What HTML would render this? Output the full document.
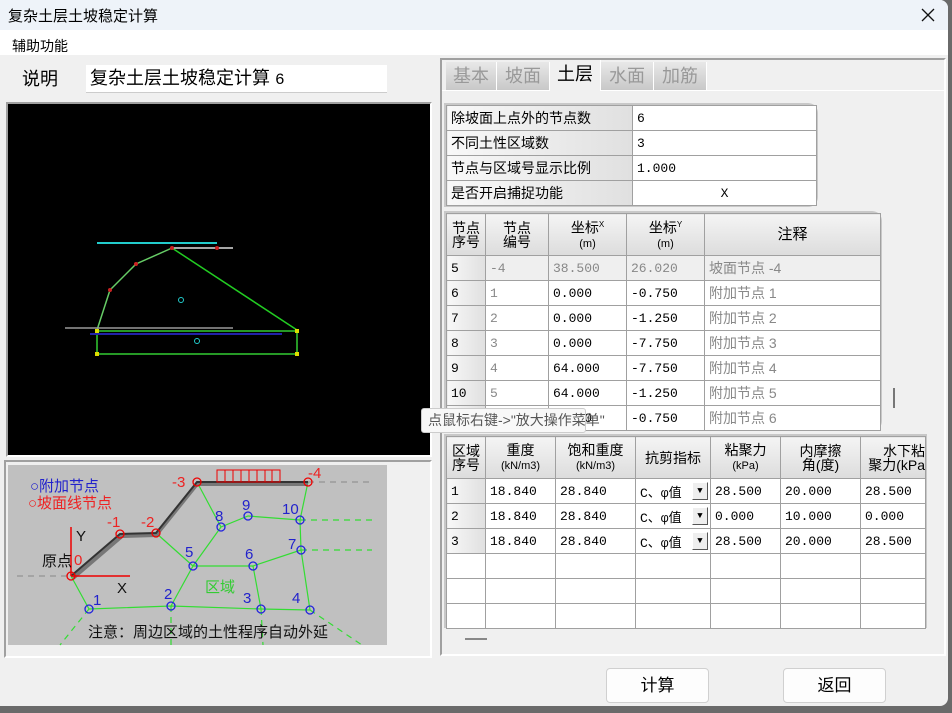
<!DOCTYPE html>
<html><head><meta charset="utf-8">
<style>
*{box-sizing:border-box;margin:0;padding:0}
body{width:952px;height:713px;overflow:hidden;background:#6a6a6a;font-family:"Liberation Sans","Noto Sans CJK SC",sans-serif;position:relative}
.a{position:absolute}
.win{left:0;top:0;width:948px;height:706px;background:#f0f0f0;border-radius:0 8px 8px 0;overflow:hidden}
.title{left:0;top:0;width:948px;height:30px;background:#eef3f9}
.menu{left:0;top:30px;width:948px;height:25px;background:#fff}
table{border-collapse:collapse;table-layout:fixed;font-family:"Liberation Mono","Noto Sans CJK SC",monospace}
td{border:1px solid #a0a0a0;font-size:14px;padding:0 4px;white-space:nowrap;overflow:hidden;height:25px;font-family:"Liberation Sans","Noto Sans CJK SC",sans-serif}
td.n{font-family:"Liberation Mono","Noto Sans CJK SC",monospace;font-size:13px}
td.h{background:linear-gradient(#f4f4f4,#dcdcdc);text-align:center;line-height:14px;font-size:14px;padding:0}
td.r{background:linear-gradient(90deg,#f8f8f8,#e0e0e0)}
.g{color:#888}
.btn{background:#fdfdfd;border:1px solid #d0d0d0;border-radius:4px;font-size:17px;text-align:center;line-height:33px}
.tab{top:62px;height:28px;background:linear-gradient(#e8e8e8,#c8c8c8);color:#999;font-size:18px;text-align:center;line-height:28px;border-right:1px solid #fff}
.dd{position:absolute;right:2px;top:3px;width:16px;height:18px;border:1px solid #555;border-top-color:#fff;border-left-color:#fff;background:#eee;font-size:9px;line-height:16px;text-align:center}
</style></head><body>
<div class="a win">
<div class="a title"></div>
<div class="a" style="left:8px;top:5px;font-size:15px">复杂土层土坡稳定计算</div>
<svg class="a" style="left:921px;top:8px" width="14" height="14"><path d="M1 1L13 13M13 1L1 13" stroke="#111" stroke-width="1.3"/></svg>
<div class="a menu"></div>
<div class="a" style="left:12px;top:36px;font-size:14px">辅助功能</div>

<div class="a" style="left:22px;top:65px;font-size:18px">说明</div>
<div class="a" style="left:86px;top:65px;width:301px;height:28px;background:#fff;border-bottom:1px solid #ccc;font-size:18px;line-height:27px;padding-left:4px">复杂土层土坡稳定计算 <span style="font-family:'Liberation Mono';font-size:16px">6</span></div>

<div class="a" style="left:6px;top:102px;width:426px;height:355px;border:2px solid #a0a0a0;border-right-color:#fff;border-bottom-color:#fff"></div>
<svg class="a" style="left:8px;top:104px" width="422" height="351">
<rect width="422" height="351" fill="#000"/>
<g transform="translate(-8,-104)">
<line x1="97" y1="243" x2="217" y2="243" stroke="#2cc" stroke-width="2"/>
<line x1="172" y1="248" x2="233" y2="248" stroke="#ddd" stroke-width="1.5"/>
<polyline points="97,330 110,290 136,264 172,248" fill="none" stroke="#6c6" stroke-width="1.5"/>
<line x1="172" y1="248" x2="297" y2="330" stroke="#2c2" stroke-width="1.5"/>
<line x1="65" y1="328" x2="233" y2="328" stroke="#999" stroke-width="1.5"/>
<rect x="97" y="331" width="200" height="23" fill="none" stroke="#3c3" stroke-width="1.5"/>
<line x1="90" y1="334" x2="282" y2="334" stroke="#22a" stroke-width="2"/>
<circle cx="181" cy="300" r="2.5" fill="none" stroke="#2cc"/>
<circle cx="197" cy="341" r="2.5" fill="none" stroke="#2cc"/>
<circle cx="172" cy="248" r="2" fill="#c22"/><circle cx="136" cy="264" r="2" fill="#c22"/><circle cx="110" cy="290" r="2" fill="#c22"/><circle cx="217" cy="248" r="2" fill="#c22"/>
<rect x="95" y="352" width="4" height="4" fill="#dd0"/><rect x="295" y="352" width="4" height="4" fill="#dd0"/><rect x="95" y="329" width="4" height="4" fill="#dd0"/><rect x="295" y="329" width="4" height="4" fill="#dd0"/>
</g></svg>

<div class="a" style="left:4px;top:460px;width:428px;height:198px;border:2px solid #a0a0a0;border-right-color:#fff;border-bottom-color:#fff;background:#f0f0f0"></div>
<svg class="a" style="left:0;top:455px" width="440" height="210" font-family="Liberation Sans,Noto Sans CJK SC,sans-serif">
<rect x="8" y="10" width="379" height="180" fill="#c0c0c0"/>
<g stroke="#3d3" stroke-width="1.2" fill="none">
<polyline points="71,121 89,154 171,151 261,154 310,155 301,95 300,65 308,27"/>
<polyline points="171,151 193,111 221,72 248,61 300,65"/>
<line x1="197" y1="27" x2="221" y2="72"/>
<line x1="156" y1="78" x2="193" y2="111"/>
<polyline points="193,111 253,111 301,95"/>
<line x1="253" y1="111" x2="261" y2="154"/>
<g stroke-dasharray="6,5"><line x1="300" y1="65" x2="372" y2="65"/><line x1="301" y1="95" x2="372" y2="95"/>
<line x1="89" y1="154" x2="60" y2="190"/><line x1="171" y1="151" x2="171" y2="190"/><line x1="261" y1="154" x2="263" y2="190"/><line x1="310" y1="155" x2="362" y2="190"/></g>
</g>
<g stroke="#888" stroke-dasharray="6,5"><line x1="17" y1="121" x2="71" y2="121"/><line x1="308" y1="27" x2="372" y2="27"/></g>
<polyline points="73,123 122,81 156,80 197,29 308,29" fill="none" stroke="#777" stroke-width="4"/>
<polyline points="71,121 120,79 156,78 197,27 308,27" fill="none" stroke="#333" stroke-width="2"/>
<g stroke="#e00" fill="none"><rect x="217" y="15" width="63" height="12"/><line x1="225" y1="15" x2="225" y2="27"/><line x1="233" y1="15" x2="233" y2="27"/><line x1="241" y1="15" x2="241" y2="27"/><line x1="249" y1="15" x2="249" y2="27"/><line x1="257" y1="15" x2="257" y2="27"/><line x1="265" y1="15" x2="265" y2="27"/><line x1="272" y1="15" x2="272" y2="27"/></g>
<g stroke="#e00" stroke-width="1.5"><line x1="71" y1="121" x2="71" y2="72"/><line x1="71" y1="121" x2="130" y2="121"/></g>
<g fill="none" stroke="#e00" stroke-width="1.3"><circle cx="71" cy="121" r="4"/><circle cx="120" cy="79" r="4"/><circle cx="156" cy="78" r="4"/><circle cx="197" cy="27" r="4"/><circle cx="308" cy="27" r="4"/></g>
<g fill="none" stroke="#22d" stroke-width="1.3"><circle cx="89" cy="154" r="4"/><circle cx="171" cy="151" r="4"/><circle cx="261" cy="154" r="4"/><circle cx="310" cy="155" r="4"/><circle cx="193" cy="111" r="4"/><circle cx="253" cy="111" r="4"/><circle cx="301" cy="95" r="4"/><circle cx="221" cy="72" r="4"/><circle cx="248" cy="61" r="4"/><circle cx="300" cy="65" r="4"/></g>
<g font-size="15" fill="#22c"><text x="30" y="36">○附加节点</text><text x="93" y="150">1</text><text x="164" y="144">2</text><text x="243" y="148">3</text><text x="292" y="148">4</text><text x="185" y="102">5</text><text x="245" y="104">6</text><text x="288" y="94">7</text><text x="215" y="66">8</text><text x="242" y="55">9</text><text x="282" y="59">10</text></g>
<g font-size="15" fill="#e22"><text x="28" y="53">○坡面线节点</text><text x="107" y="72">-1</text><text x="141" y="72">-2</text><text x="172" y="32">-3</text><text x="308" y="23">-4</text><text x="74" y="110">0</text></g>
<g font-size="15" fill="#111"><text x="76" y="86">Y</text><text x="117" y="138">X</text><text x="42" y="111">原点</text><text x="88" y="182">注意：周边区域的土性程序自动外延</text></g>
<text x="205" y="137" font-size="15" fill="#3c3">区域</text>
</svg>

<div class="a" style="left:440px;top:58px;width:506px;height:598px;border:2px solid #a0a0a0;border-right-color:#fff;border-bottom-color:#fff"></div>
<div class="a" style="left:442px;top:90px;width:502px;height:564px;background:#f0f0f0;border-top:1px solid #fff"></div>
<div class="a tab" style="left:446px;width:51px">基本</div>
<div class="a tab" style="left:497px;width:53px">坡面</div>
<div class="a tab" style="left:550px;top:60px;height:31px;width:51px;background:#f0f0f0;color:#000">土层</div>
<div class="a tab" style="left:601px;width:53px">水面</div>
<div class="a tab" style="left:654px;width:53px">加筋</div>

<div class="a" style="left:444px;top:103px;width:374px;height:104px;background:#c8c8c8;border-radius:0 10px 10px 0"></div>
<table class="a" style="left:446px;top:105px;width:370px;background:#fff">
<col style="width:186px"><col style="width:184px">
<tr><td class="r">除坡面上点外的节点数</td><td class="n">6</td></tr>
<tr><td class="r">不同土性区域数</td><td class="n">3</td></tr>
<tr><td class="r">节点与区域号显示比例</td><td class="n">1.000</td></tr>
<tr><td class="r">是否开启捕捉功能</td><td class="n" style="text-align:center">X</td></tr>
</table>

<div class="a" style="left:444px;top:211px;width:438px;height:220px;background:#c8c8c8;border-radius:0 10px 10px 0"></div>
<table class="a" style="left:446px;top:213px;width:434px;background:#fff">
<col style="width:39px"><col style="width:63px"><col style="width:78px"><col style="width:78px"><col style="width:176px">
<tr style="height:42px"><td class="h">节点<br>序号</td><td class="h">节点<br>编号</td><td class="h">坐标<sup style="font-size:8px">X</sup><br><span style="font-size:11px">(m)</span></td><td class="h">坐标<sup style="font-size:8px">Y</sup><br><span style="font-size:11px">(m)</span></td><td class="h" style="font-size:15px">注释</td></tr>
<tr style="background:#efefef"><td class="r n">5</td><td class="n g">-4</td><td class="n g">38.500</td><td class="n g">26.020</td><td class="g">坡面节点 -4</td></tr>
<tr><td class="r n">6</td><td class="n g">1</td><td class="n">0.000</td><td class="n">-0.750</td><td class="g">附加节点 1</td></tr>
<tr><td class="r n">7</td><td class="n g">2</td><td class="n">0.000</td><td class="n">-1.250</td><td class="g">附加节点 2</td></tr>
<tr><td class="r n">8</td><td class="n g">3</td><td class="n">0.000</td><td class="n">-7.750</td><td class="g">附加节点 3</td></tr>
<tr><td class="r n">9</td><td class="n g">4</td><td class="n">64.000</td><td class="n">-7.750</td><td class="g">附加节点 4</td></tr>
<tr><td class="r n">10</td><td class="n g">5</td><td class="n">64.000</td><td class="n">-1.250</td><td class="g">附加节点 5</td></tr>
<tr style="height:22px"><td class="r n">11</td><td class="n g">6</td><td class="n">0.000</td><td class="n">-0.750</td><td class="g">附加节点 6</td></tr>
</table>
<div class="a" style="left:893px;top:388px;width:2px;height:20px;background:#777"></div>

<div class="a" style="left:444px;top:434px;width:483px;height:194px;background:#c8c8c8"></div>
<table class="a" style="left:446px;top:436px;width:479px;background:#fff">
<col style="width:39px"><col style="width:70px"><col style="width:80px"><col style="width:75px"><col style="width:70px"><col style="width:80px"><col style="width:65px">
<tr style="height:42px"><td class="h">区域<br>序号</td><td class="h">重度<br><span style="font-size:11px">(kN/m3)</span></td><td class="h">饱和重度<br><span style="font-size:11px">(kN/m3)</span></td><td class="h">抗剪指标</td><td class="h">粘聚力<br><span style="font-size:11px">(kPa)</span></td><td class="h">内摩擦<br>角(度)</td><td class="h" style="text-align:right">水下粘<br>聚力(kPa</td></tr>
<tr><td class="r n">1</td><td class="n">18.840</td><td class="n">28.840</td><td class="n" style="position:relative">C、φ值<span class="dd">▼</span></td><td class="n">28.500</td><td class="n">20.000</td><td class="n">28.500</td></tr>
<tr><td class="r n">2</td><td class="n">18.840</td><td class="n">28.840</td><td class="n" style="position:relative">C、φ值<span class="dd">▼</span></td><td class="n">0.000</td><td class="n">10.000</td><td class="n">0.000</td></tr>
<tr><td class="r n">3</td><td class="n">18.840</td><td class="n">28.840</td><td class="n" style="position:relative">C、φ值<span class="dd">▼</span></td><td class="n">28.500</td><td class="n">20.000</td><td class="n">28.500</td></tr>
<tr><td></td><td></td><td></td><td></td><td></td><td></td><td></td></tr>
<tr><td></td><td></td><td></td><td></td><td></td><td></td><td></td></tr>
<tr style="height:20px"><td></td><td></td><td></td><td></td><td></td><td></td><td></td></tr>
</table>
<div class="a" style="left:465px;top:638px;width:22px;height:2px;background:#888"></div>

<div class="a" style="left:421px;top:408px;width:165px;height:25px;background:#f8f8f8;border:1px solid #ccc;border-radius:3px;font-size:14px;line-height:23px;padding-left:6px;color:#555;white-space:nowrap">点鼠标右键-&gt;"放大操作菜单"</div>

<div class="a btn" style="left:606px;top:668px;width:103px;height:35px">计算</div>
<div class="a btn" style="left:783px;top:668px;width:103px;height:35px">返回</div>
</div>
</body></html>
